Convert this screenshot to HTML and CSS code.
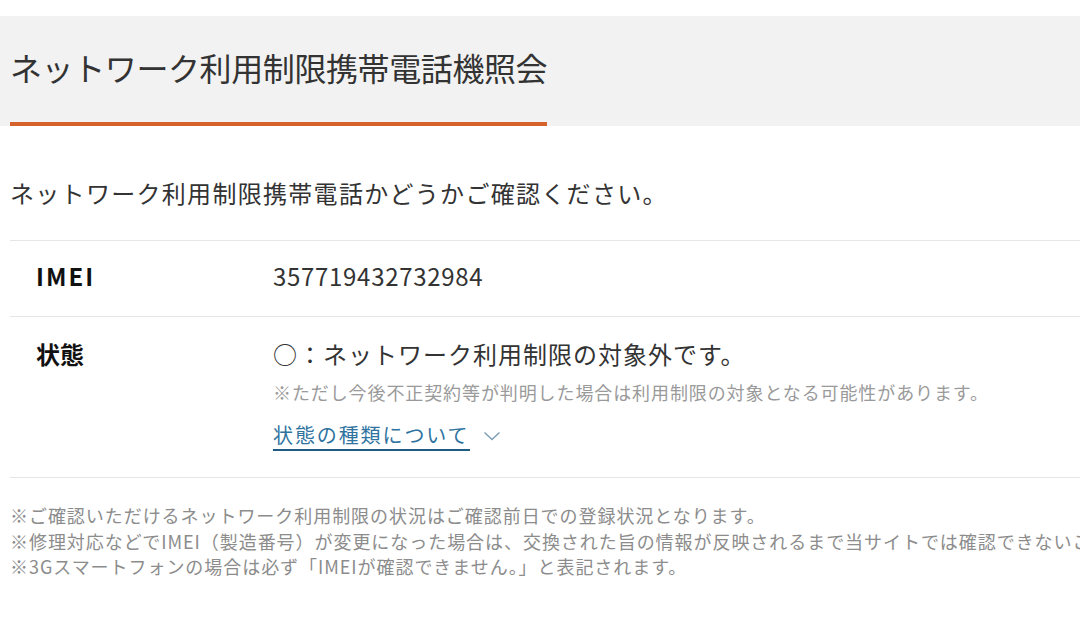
FILE: index.html
```html
<!DOCTYPE html>
<html lang="ja">
<head>
<meta charset="utf-8">
<title>ネットワーク利用制限携帯電話機照会</title>
<link rel="stylesheet" href="styles.css">
</head>
<body>
<div class="page">
  <div class="page-header">
    <h1 class="page-title">ネットワーク利用制限携帯電話機照会</h1>
  </div>

  <div class="content">
    <p class="lead">ネットワーク利用制限携帯電話かどうかご確認ください。</p>

    <dl class="result">
      <div class="result-row">
        <dt class="result-label label-latin">IMEI</dt>
        <dd class="result-value imei">357719432732984</dd>
      </div>
      <div class="result-row">
        <dt class="result-label">状態</dt>
        <dd class="result-value">
          <p class="status">○：ネットワーク利用制限の対象外です。</p>
          <p class="status-note">※ただし今後不正契約等が判明した場合は利用制限の対象となる可能性があります。</p>
          <a href="#" class="status-link"><span class="status-link-text">状態の種類について</span><svg class="chevron" width="18" height="10" viewBox="0 0 18 10"><path d="M1.5 1.5 L9 8.5 L16.5 1.5" fill="none" stroke="#7f9fb6" stroke-width="1.5"/></svg></a>
        </dd>
      </div>
    </dl>

    <ul class="notes">
      <li>※ご確認いただけるネットワーク利用制限の状況はご確認前日での登録状況となります。</li>
      <li>※修理対応などでIMEI（製造番号）が変更になった場合は、交換された旨の情報が反映されるまで当サイトでは確認できないことがあります。</li>
      <li>※3Gスマートフォンの場合は必ず「IMEIが確認できません。」と表記されます。</li>
    </ul>
  </div>
</div>
</body>
</html>
```

FILE: styles.css
```css
html, body { margin: 0; padding: 0; background: #fff; }
body { font-family: "Noto Sans CJK JP", "Noto Sans", sans-serif; color: #333; overflow: hidden; }
p, ul, dl, dd { margin: 0; padding: 0; }

.page { padding-top: 16px; width: 1080px; overflow: hidden; }

.page-header { background: #f2f2f2; height: 110px; }
.page-title { margin: 0 0 0 10px; width: 537px; height: 110px; padding: 31px 0 0; box-sizing: border-box; border-bottom: 4px solid #d4622a; font-size: 32px; font-weight: normal; line-height: 40px; letter-spacing: -0.4px; color: #333; white-space: nowrap; }

.content { padding-left: 10px; }

.lead { margin-top: 49px; margin-bottom: 29px; font-size: 24px; line-height: 36px; letter-spacing: 1.3px; white-space: nowrap; }

.result { border-top: 1px solid #e6e6e6; }
.result-row { display: grid; grid-template-columns: 263px 1fr; border-bottom: 1px solid #e6e6e6; }
.result-row:first-child { padding: 17px 0 22px; }
.result-row:last-child { padding: 19px 0 26px; }
.result-label { padding-left: 26px; font-size: 24px; font-weight: bold; line-height: 36px; color: #111; }
.label-latin { letter-spacing: 2px; }
.result-value { font-size: 24px; line-height: 36px; white-space: nowrap; }
.imei { letter-spacing: 0.7px; color: #333; }

.status { letter-spacing: 1px; }
.status-note { margin-top: 7px; font-size: 18px; line-height: 26px; letter-spacing: 0.9px; color: #9a9a9a; }
.status-link { display: inline-flex; align-items: center; margin-top: 16px; height: 30px; text-decoration: none; }
.status-link-text { font-size: 20px; line-height: 28px; letter-spacing: 1.9px; color: #2f73a0; border-bottom: 2px solid #1f5b82; }
.chevron { margin-left: 13px; }

.notes { list-style: none; margin-top: 25px; font-size: 18px; line-height: 25.5px; letter-spacing: 0.95px; color: #8c8c8c; white-space: nowrap; }
```
